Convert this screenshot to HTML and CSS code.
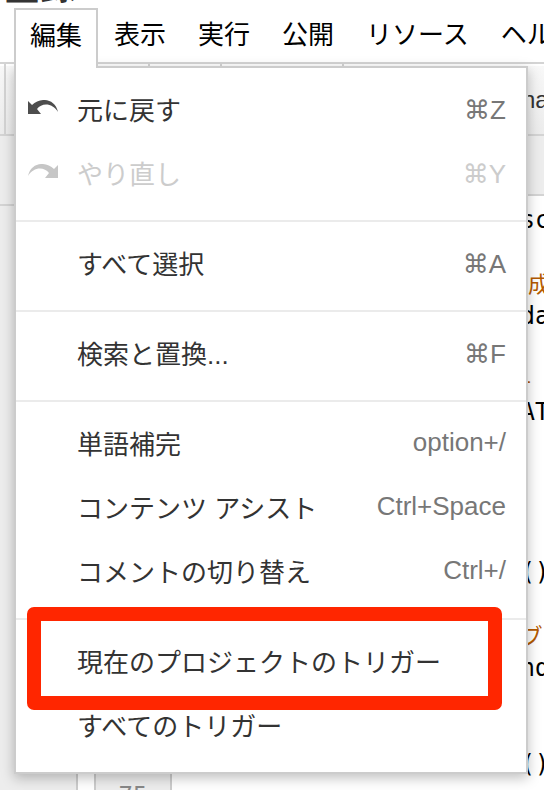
FILE: index.html
```
<!DOCTYPE html>
<html lang="ja">

<head>
    <meta charset="UTF-8">
    <meta name="viewport" content="width=device-width, initial-scale=1.0">
    <title>スクリプト エディタ</title>
    <link rel="stylesheet" href="styles.css">
</head>

<body>
    <header class="title">登録</header>
    <nav class="menubar">
        <div class="menu">
            <button class="menu-button open" aria-expanded="true">編集</button>
            <div class="dropdown">
                <div class="group">
                    <button class="item">
                        <svg class="icon" viewBox="0 0 30 14" aria-hidden="true">
                            <path d="M0 1 L4 5 C12 -3 27 -2 30 12 C25 3 14 2 9 9 L13 14 L0 14 Z" />
                        </svg>
                        <span class="label">元に戻す</span><kbd class="symbol">⌘Z</kbd>
                    </button>
                    <button class="item" disabled>
                        <svg class="icon" viewBox="0 0 30 14" aria-hidden="true">
                            <path d="M30 1 L26 5 C18 -3 3 -2 0 12 C5 3 16 2 21 9 L17 14 L30 14 Z" />
                        </svg>
                        <span class="label">やり直し</span><kbd class="symbol">⌘Y</kbd>
                    </button>
                </div>
                <div class="group">
                    <button class="item"><span class="label">すべて選択</span><kbd class="symbol">⌘A</kbd></button>
                </div>
                <div class="group">
                    <button class="item"><span class="label">検索と置換...</span><kbd class="symbol">⌘F</kbd></button>
                </div>
                <div class="group">
                    <button class="item"><span class="label">単語補完</span><kbd>option+/</kbd></button>
                    <button class="item"><span class="label">コンテンツ アシスト</span><kbd>Ctrl+Space</kbd></button>
                    <button class="item"><span class="label">コメントの切り替え</span><kbd>Ctrl+/</kbd></button>
                </div>
                <div class="group">
                    <button class="item marked"><span class="label">現在のプロジェクトのトリガー</span></button>
                    <button class="item"><span class="label">すべてのトリガー</span></button>
                </div>
            </div>
        </div>
        <button class="menu-button">表示</button>
        <button class="menu-button">実行</button>
        <button class="menu-button">公開</button>
        <button class="menu-button">リソース</button>
        <button class="menu-button">ヘルプ</button>
    </nav>

    <div class="toolbar">
        <span class="tool small"></span>
        <span class="tool wide"></span>
        <span class="tool"></span>
        <span class="tool large"></span>
        <span class="function-name">na</span>
    </div>

    <main class="workspace">
        <aside class="files">
            <div class="files-head"></div>
        </aside>
        <section class="editor">
            <div class="tabs"></div>
            <div class="source">
                <div class="gutter"><span>75</span></div>
                <pre class="code"> sc

<i>作成</i>
 da

 <i>-</i>
 AT




 ()

 <i>ブェ</i>
 nd


 ()
</pre>
            </div>
        </section>
    </main>
</body>

</html>
```

FILE: styles.css
```
* {
    box-sizing: border-box;
}

body {
    margin: 0;
    height: 100vh;
    display: flex;
    flex-direction: column;
    overflow: hidden;
    background: #fff;
    font-family: "Liberation Sans", "Noto Sans CJK JP", sans-serif;
    font-size: 26px;
    color: #333;
}

button {
    font: inherit;
    border: none;
    background: none;
    padding: 0;
    margin: 0;
    text-align: left;
    white-space: nowrap;
}

.title {
    display: flex;
    align-items: flex-end;
    flex: none;
    height: 8px;
    padding-left: 4px;
    overflow: hidden;
    font-size: 36px;
    font-weight: bold;
    line-height: 40px;
}

.menubar {
    display: flex;
    flex: none;
    height: 56px;
    padding-left: 14px;
    border-bottom: 2px solid #d4d4d4;
}

.menu {
    position: relative;
}

.menu-button {
    flex: none;
    height: 54px;
    padding: 0 16px;
    line-height: 52px;
    color: #000;
}

.menu-button.open {
    position: relative;
    z-index: 2;
    height: 60px;
    padding: 0 14px 8px;
    border: 2px solid #ccc;
    border-bottom: none;
    background: #fff;
}

/* edit menu */
.dropdown {
    position: absolute;
    z-index: 1;
    top: 58px;
    left: 0;
    width: calc(100vw - 30px);
    padding: 8px 0 14px;
    border: 2px solid #ccc;
    background: #fff;
    box-shadow: 0 4px 12px rgba(0, 0, 0, 0.25);
}

.group + .group {
    margin-top: 16px;
    padding-top: 8px;
    border-top: 2px solid #ebebeb;
}

.group:last-child {
    padding-bottom: 2px;
}

.item {
    position: relative;
    display: flex;
    align-items: center;
    width: 100%;
    height: 64px;
    padding: 0 20px 0 61px;
    color: #333;
}

.item .label {
    flex: 1;
}

.item kbd {
    font-family: "Liberation Sans", "DejaVu Sans", sans-serif;
    color: #777;
}

.item .symbol {
    padding-top: 4px;
}

.item:disabled,
.item:disabled kbd {
    color: #ccc;
}

.icon {
    position: absolute;
    left: 12px;
    top: 24px;
    width: 30px;
    height: 14px;
    fill: #4d4d4d;
}

.item:disabled .icon {
    fill: #c6c6c6;
}

.marked::after {
    content: "";
    position: absolute;
    inset: -21px 24px -18px 11px;
    border: 14px solid #ff2600;
    border-radius: 7px;
}

.toolbar {
    display: flex;
    align-items: center;
    flex: none;
    height: 72px;
    border-top: 2px solid #fff;
    border-bottom: 2px solid #d4d4d4;
    background: linear-gradient(#f8f8f8, #ececec);
}

.tool {
    flex: none;
    align-self: stretch;
    width: 72px;
    margin-top: -2px;
    border-right: 2px solid #d4d4d4;
}

.tool.small {
    width: 6px;
}

.tool.wide {
    width: 144px;
}

.tool.large {
    width: 122px;
}

.function-name {
    margin-left: 178px;
    font-size: 24px;
}

.workspace {
    display: flex;
    flex: 1;
    min-height: 0;
}

.files {
    width: 78px;
    border-right: 2px solid #ccc;
    background: #ededed;
}

.files-head {
    height: 70px;
    border-bottom: 2px solid #d4d4d4;
}

.editor {
    display: flex;
    flex-direction: column;
    flex: 1;
    min-width: 0;
}

.tabs {
    flex: none;
    height: 60px;
    border-bottom: 2px solid #d4d4d4;
    background: #ededed;
}

.source {
    display: flex;
    flex: 1;
    min-height: 0;
    padding-left: 16px;
    font: 24px/32px "DejaVu Sans Mono", "Noto Sans CJK JP", monospace;
}

.gutter {
    width: 78px;
    padding-top: 584px;
    border: solid #ccc;
    border-width: 0 2px;
    background: #ededed;
    text-align: center;
    color: #888;
}

.code {
    flex: 1;
    min-width: 0;
    margin: 0;
    padding: 8px 0 0 334px;
    overflow: hidden;
    font: inherit;
    color: #000;
}

.code i {
    font-size: 22px;
    font-style: normal;
    line-height: 1;
    color: #b45a00;
}
```
